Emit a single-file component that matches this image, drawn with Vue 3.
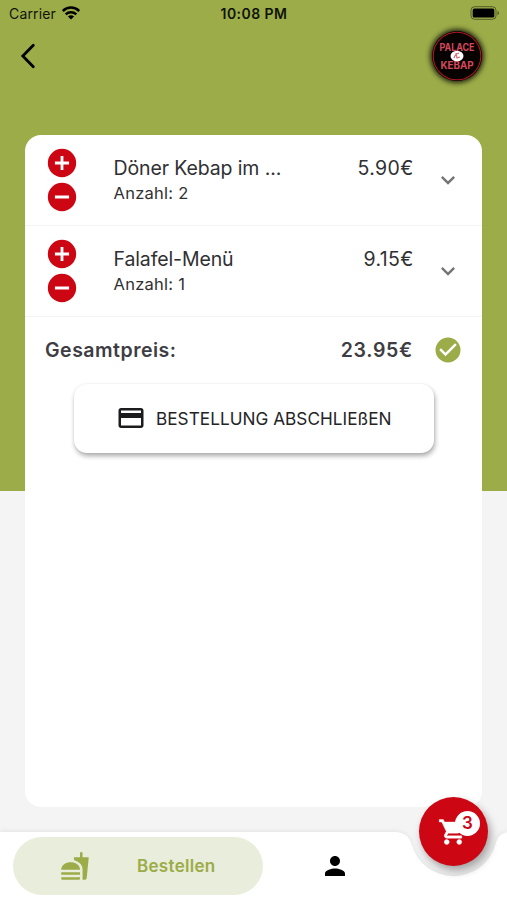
<script setup>
const items = [
  { name: 'Döner Kebap im ...', count: 2, price: '5.90€' },
  { name: 'Falafel-Menü', count: 1, price: '9.15€' },
]
const cartCount = 3
</script>

<template>
  <div class="screen">
    <header class="status">
      <div class="carrier">
        <span>Carrier</span>
        <svg class="wifi" viewBox="0 0 18 14">
          <path d="M.8 5a11.6 11.6 0 0 1 16.4 0M3.7 8.3a7.7 7.7 0 0 1 10.6 0" fill="none" stroke="#000" stroke-width="2.5" />
          <path d="M9 13.5 5.9 10.4a4.9 4.9 0 0 1 6.2 0z" />
        </svg>
      </div>
      <span class="time">10:08 PM</span>
      <svg class="battery" viewBox="0 0 30 14">
        <rect x="1" y=".7" width="25" height="12.6" rx="3.6" fill="none" stroke="#000" stroke-opacity=".45" />
        <rect x="2.7" y="2.4" width="21.6" height="9.2" rx="1.6" />
        <path d="M27.5 5v4.2q1.5-.6 1.5-2.1t-1.5-2.1z" opacity=".5" />
      </svg>
    </header>

    <div class="topbar">
      <svg class="back" viewBox="0 0 16 26">
        <path d="M13.3 2.3 2.8 13l10.5 10.7" fill="none" stroke="#000" stroke-width="2.8" stroke-linecap="round" />
      </svg>
      <div class="logo">
        <svg viewBox="0 0 50 50">
          <circle cx="25" cy="25" r="23.8" fill="#080303" stroke="#a91624" stroke-width="1.1" />
          <text x="25" y="20.2" textLength="35" lengthAdjust="spacingAndGlyphs">PALACE</text>
          <text x="25" y="37.6" textLength="33" lengthAdjust="spacingAndGlyphs">KEBAP</text>
          <ellipse cx="25" cy="25" rx="6.5" ry="5.3" fill="#fff" />
          <path d="M22 27q1-4 5-5M24 22l1 5 3-1" fill="none" stroke="#d56b77" stroke-width="1.2" />
        </svg>
      </div>
    </div>

    <main class="card">
      <section v-for="item in items" :key="item.name" class="row">
        <div class="stepper">
          <svg viewBox="0 0 24 24"><path d="M12 2a10 10 0 1 0 0 20 10 10 0 0 0 0-20zm5 11h-4v4h-2v-4H7v-2h4V7h2v4h4z" /></svg>
          <svg viewBox="0 0 24 24"><path d="M12 2a10 10 0 1 0 0 20 10 10 0 0 0 0-20zm5 11H7v-2h10z" /></svg>
        </div>
        <div class="details">
          <div class="name">{{ item.name }}</div>
          <div class="count">Anzahl: {{ item.count }}</div>
        </div>
        <div class="price">{{ item.price }}</div>
        <svg class="chevron" viewBox="0 0 24 24"><path d="M16.59 8.59 12 13.17 7.41 8.59 6 10l6 6 6-6z" /></svg>
      </section>

      <section class="total">
        <span class="label">Gesamtpreis:</span>
        <span class="sum">23.95€</span>
        <svg class="check" viewBox="0 0 24 24"><path d="M12 2a10 10 0 1 0 0 20 10 10 0 0 0 0-20zm-2 15-5-5 1.41-1.41L10 14.17l7.59-7.59L19 8z" /></svg>
      </section>

      <button class="checkout">
        <svg viewBox="0 0 24 24"><path d="M20 4H4c-1.11 0-1.99.89-1.99 2L2 18c0 1.11.89 2 2 2h16c1.11 0 2-.89 2-2V6c0-1.11-.89-2-2-2zm0 14H4v-6h16v6zm0-10H4V6h16v2z" /></svg>
        <span>BESTELLUNG ABSCHLIEßEN</span>
      </button>
    </main>

    <nav class="nav">
      <svg class="nav-shape" viewBox="0 0 507 68">
        <path d="M0 0H394C404 0 409 4 411.5 12A43.5 43.5 0 0 0 495.500 12C497.5 5 501 1 507 .3V68H0z" />
      </svg>
      <div class="tab active">
        <svg viewBox="0 0 24 24"><path d="M18.06 22.99h1.66c.84 0 1.53-.64 1.63-1.46L23 5.05h-5V1h-1.97v4.05h-4.97l.3 2.34c1.71.47 3.31 1.32 4.27 2.26 1.44 1.42 2.43 2.89 2.43 5.29v8.05zM1 21.99V21h15.03v.99c0 .55-.45 1-1.01 1H2.01c-.56 0-1.01-.45-1.01-1zm15.03-7c0-8-15.03-8-15.03 0h15.03zM1.02 17h15v2h-15z" /></svg>
        <span>Bestellen</span>
      </div>
      <div class="tab">
        <svg viewBox="0 0 24 24"><path d="M12 12c2.21 0 4-1.79 4-4s-1.79-4-4-4-4 1.79-4 4 1.79 4 4 4zm0 2c-2.67 0-8 1.34-8 4v2h16v-2c0-2.66-5.33-4-8-4z" /></svg>
      </div>
      <button class="cart">
        <svg viewBox="0 0 24 24"><path d="M7 18c-1.100 0-1.990.9-1.990 2S5.900 22 7 22s2-.9 2-2-.9-2-2-2zM1 2v2h2l3.600 7.590-1.350 2.450c-.16.28-.25.61-.25.96 0 1.100.9 2 2 2h12v-2H7.420c-.14 0-.25-.11-.25-.25l.03-.12.9-1.630h7.450c.75 0 1.410-.41 1.750-1.030l3.580-6.490A1 1 0 0 0 20 4H5.210l-.94-2H1zm16 16c-1.100 0-1.990.9-1.990 2s.89 2 1.990 2 2-.9 2-2-.9-2-2-2z" /></svg>
        <span class="badge">{{ cartCount }}</span>
      </button>
    </nav>
  </div>
</template>

<style>
body {
  margin: 0;
}
</style>

<style scoped>
.screen {
  width: 507px;
  height: 900px;
  display: flex;
  flex-direction: column;
  overflow: hidden;
  box-sizing: border-box;
  background: linear-gradient(#9bac48 491px, #f4f4f4 491px);
  font-family: Inter, "Liberation Sans", sans-serif;
  color: #303033;
}
svg {
  display: block;
  flex: none;
}
button {
  border: 0;
  padding: 0;
  font-family: inherit;
}
.status {
  height: 28px;
  display: grid;
  grid-template-columns: 1fr auto 1fr;
  align-items: center;
  padding: 0 7px 2px 9px;
  box-sizing: border-box;
  color: #10130a;
}
.carrier {
  display: flex;
  align-items: center;
  gap: 6px;
  font-size: 14px;
  letter-spacing: .15px;
}
.wifi {
  width: 18px;
  height: 14px;
  margin-top: -1px;
}
.time {
  font-size: 14px;
  font-weight: 600;
  letter-spacing: .45px;
  margin-right: 1px;
}
.battery {
  width: 30px;
  height: 14px;
  justify-self: end;
}
.topbar {
  height: 107px;
  display: flex;
  justify-content: space-between;
  align-items: flex-start;
  padding: 0 25px 0 20px;
  box-sizing: border-box;
  flex: none;
}
.back {
  width: 16px;
  height: 26px;
  margin-top: 15px;
}
.logo {
  width: 50px;
  height: 50px;
  margin-top: 3px;
  border-radius: 50%;
  background: #080303;
  box-shadow: 0 0 5px 2px #000c;
}
.logo text {
  font: 700 10.2px Inter, sans-serif;
  fill: #d4485a;
  text-anchor: middle;
}
.card {
  height: 672px;
  width: 457px;
  margin: 0 0 0 25px;
  padding-top: .5px;
  box-sizing: border-box;
  background: #fff;
  border-radius: 16px;
  flex: none;
}
.row {
  height: 90.5px;
  box-sizing: border-box;
  border-bottom: 1px solid #f4f4f4;
  display: flex;
  align-items: flex-start;
  padding: 10.7px 20px 0;
}
.stepper svg {
  width: 34px;
  height: 34px;
  fill: #cc0613;
}
.details {
  margin-left: 34.5px;
  padding-top: 9px;
  flex: 1;
}
.name,
.price {
  font-size: 19.5px;
  line-height: 27px;
  white-space: nowrap;
}
.name {
  letter-spacing: -.12px;
}
.count {
  font-size: 16.5px;
  line-height: 24px;
  letter-spacing: .25px;
  margin-top: -1px;
}
.price {
  padding-top: 9px;
  letter-spacing: .35px;
}
.chevron {
  width: 28px;
  height: 28px;
  margin: 20px 0 0 20.5px;
  fill: #757575;
}
.total {
  height: 67px;
  display: flex;
  align-items: center;
  padding: 0 19px 0 20px;
  box-sizing: border-box;
  font-size: 19.5px;
  font-weight: 600;
  color: #3d3d43;
}
.label {
  flex: 1;
  letter-spacing: .5px;
}
.sum {
  letter-spacing: .7px;
}
.check {
  width: 30px;
  height: 30px;
  margin-left: 20px;
  fill: #9bac48;
}
.checkout {
  width: 360px;
  height: 69px;
  margin: 0 0 0 49px;
  border-radius: 13px;
  background: #fff;
  box-shadow: 1px 3px 5px #0005, 0 0 2px #0001;
  display: flex;
  align-items: center;
  justify-content: center;
  gap: 9.5px;
  color: #242426;
  font-size: 17.2px;
  letter-spacing: .03px;
  white-space: nowrap;
}
.checkout svg {
  width: 30px;
  height: 30px;
  fill: #1c1c1f;
}
.nav {
  height: 68px;
  margin-top: 25px;
  position: relative;
  display: flex;
  align-items: flex-start;
  padding: 4.5px 0 0 13px;
  box-sizing: border-box;
  flex: none;
}
.nav-shape {
  position: absolute;
  inset: 0;
  width: 507px;
  height: 68px;
  fill: #fff;
  overflow: visible;
  filter: drop-shadow(0 -1px 2px #0001);
}
.tab {
  position: relative;
  height: 58px;
  display: flex;
  align-items: center;
  margin-left: 57px;
}
.tab svg {
  width: 30px;
  height: 30px;
}
.active {
  width: 250px;
  margin-left: 0;
  padding-left: 47px;
  box-sizing: border-box;
  border-radius: 29px;
  background: #e9eddb;
  color: #9bac48;
  fill: #9bac48;
  font-size: 17px;
  font-weight: 600;
  letter-spacing: .3px;
}
.active span {
  margin-left: 47px;
}
.cart {
  position: absolute;
  left: 418.5px;
  top: -35px;
  width: 69px;
  height: 69px;
  border-radius: 50%;
  background: #cc0613;
  box-shadow: 3px 5px 9px #0005;
  display: flex;
  padding: 19.5px 0 0 19.5px;
}
.cart svg {
  width: 30px;
  height: 30px;
  fill: #fff;
}
.cart svg path {
  stroke: #fff;
  stroke-width: .3px;
}
.cart svg::before {
  content: none;
}
.badge {
  position: absolute;
  left: 36.5px;
  top: 14px;
  width: 25px;
  height: 25px;
  border-radius: 50%;
  background: #fff;
  color: #cc0613;
  font-size: 17px;
  font-weight: 600;
  line-height: 25px;
  text-align: center;
}
</style>
